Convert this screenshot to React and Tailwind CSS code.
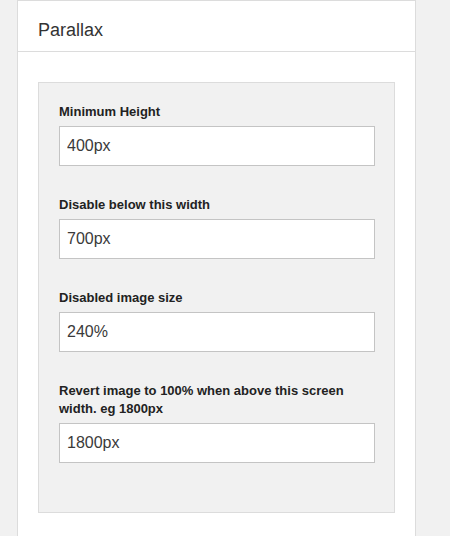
import React from "react";

const fields = [
  { label: "Minimum Height", value: "400px" },
  { label: "Disable below this width", value: "700px" },
  { label: "Disabled image size", value: "240%" },
  { label: "Revert image to 100% when above this screen width. eg 1800px", value: "1800px" },
];

const App = () => {
  return (
    <div className="min-h-screen bg-[#f1f1f1] pl-[17px] font-['Liberation_Sans',Arial,sans-serif]">
      <div className="w-[399px] bg-white border border-[#dcdcdc] border-b-0 min-h-[536px]">
        <div className="h-[51px] border-b border-[#dcdcdc] px-5 flex items-center pt-[8px]">
          <h2 className="text-[18px] text-[#333]">Parallax</h2>
        </div>
        <div className="pt-[30px] px-5">
          <div className="bg-[#f1f1f1] border border-[#dcdcdc] px-5 pt-5 pb-5">
            {fields.map((f) => (
              <div key={f.label} className="mb-[30px] last:mb-[29px]">
                <label className="block text-[13px] leading-[18px] font-bold text-[#222] mb-[5px] pr-6">{f.label}</label>
                <input
                  readOnly
                  value={f.value}
                  className="block w-[316px] h-10 border border-[#c4c4c4] bg-white px-[7px] text-[16px] text-[#3a3a3a] outline-none"
                />
              </div>
            ))}
          </div>
        </div>
      </div>
    </div>
  );
};

export default App;
